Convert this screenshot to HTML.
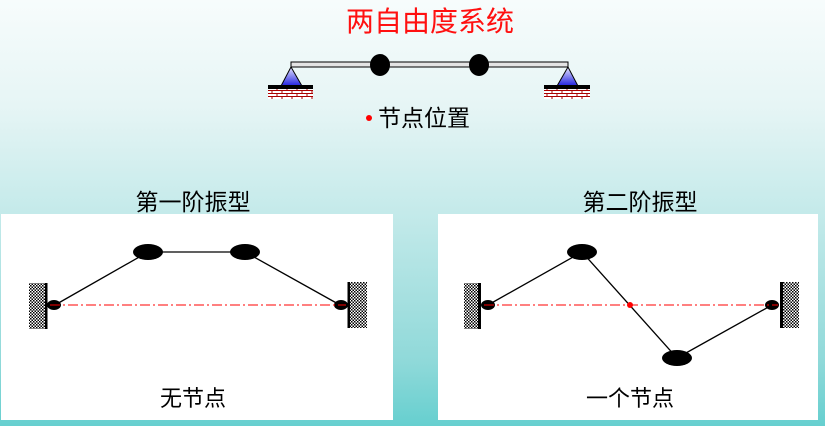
<!DOCTYPE html>
<html><head><meta charset="utf-8"><style>
html,body{margin:0;padding:0;width:825px;height:426px;overflow:hidden}
body{background:linear-gradient(to bottom,#f7fcfc 0%,#e6f5f5 25%,#c4eaea 50%,#a6e0e0 70%,#8fd9d9 85%,#66cfcf 100%);font-family:"Liberation Serif","Noto Serif CJK SC","Noto Sans CJK SC",serif}
</style></head><body>
<svg width="825" height="426" viewBox="0 0 825 426" xmlns="http://www.w3.org/2000/svg">
<defs>
<linearGradient id="tri" x1="0" y1="0" x2="0" y2="1"><stop offset="0" stop-color="#e8e8ff"/><stop offset="1" stop-color="#2020e0"/></linearGradient>
<pattern id="hatch" width="3" height="3" patternUnits="userSpaceOnUse"><rect width="3" height="3" fill="#fff"/><rect width="1.5" height="1.5" fill="#000"/><rect x="1.5" y="1.5" width="1.5" height="1.5" fill="#000"/></pattern>
<pattern id="brick" width="10" height="6" patternUnits="userSpaceOnUse"><rect width="10" height="6" fill="#fff"/><path d="M0 0.5H10M0 3.5H10M2 0.5V3.5M7 3.5V6.5" stroke="#a00" stroke-width="1"/></pattern>
</defs>
<text x="430" y="31" text-anchor="middle" font-size="28" fill="#ff1010" font-family="Liberation Sans,'Noto Sans CJK SC',sans-serif">两自由度系统</text>
<!-- beam -->
<rect x="291" y="62" width="277" height="5" fill="#e4e4e4" stroke="#000" stroke-width="1"/>
<ellipse cx="380" cy="65" rx="10" ry="11" fill="#000"/>
<ellipse cx="479" cy="65" rx="10" ry="11" fill="#000"/>
<polygon points="291,67 281,86 302,86" fill="url(#tri)" stroke="#000"/>
<polygon points="568,67 557,86 578,86" fill="url(#tri)" stroke="#000"/>
<rect x="268" y="85" width="45" height="4" fill="#000"/>
<rect x="268" y="89" width="45" height="10" fill="url(#brick)"/>
<rect x="544" y="85" width="46" height="4" fill="#000"/>
<rect x="544" y="89" width="46" height="10" fill="url(#brick)"/>
<circle cx="369" cy="118" r="3" fill="#f00"/>
<text x="378" y="126" font-size="23" fill="#000" font-family="Liberation Sans,'Noto Sans CJK SC',sans-serif">节点位置</text>
<text x="193" y="210" text-anchor="middle" font-size="23" fill="#000" font-family="Liberation Sans,'Noto Sans CJK SC',sans-serif">第一阶振型</text>
<text x="640" y="210" text-anchor="middle" font-size="23" fill="#000" font-family="Liberation Sans,'Noto Sans CJK SC',sans-serif">第二阶振型</text>
<!-- panel 1 -->
<rect x="1" y="214" width="392" height="206" fill="#fff"/>
<rect x="29" y="283" width="16" height="46" fill="url(#hatch)"/>
<rect x="45" y="283" width="2.5" height="46" fill="#000"/>
<rect x="350" y="282" width="17" height="46" fill="url(#hatch)"/>
<rect x="347.5" y="282" width="2.5" height="46" fill="#000"/>
<polyline points="55,305 148,252 245,252 340,305" fill="none" stroke="#000" stroke-width="1.3"/>
<ellipse cx="148" cy="252" rx="15" ry="8" fill="#000"/>
<ellipse cx="245" cy="252" rx="15" ry="8" fill="#000"/>
<ellipse cx="54" cy="305" rx="7" ry="5" fill="#000"/>
<ellipse cx="341" cy="305" rx="7" ry="5" fill="#000"/>
<line x1="50" y1="305" x2="346" y2="305" stroke="#f00" stroke-width="1" stroke-dasharray="10,3,2,3"/>
<text x="193" y="406" text-anchor="middle" font-size="22" fill="#000" font-family="Liberation Sans,'Noto Sans CJK SC',sans-serif">无节点</text>
<!-- panel 2 -->
<rect x="438" y="214" width="380" height="206" fill="#fff"/>
<rect x="464" y="283" width="14" height="46" fill="url(#hatch)"/>
<rect x="478" y="283" width="3" height="46" fill="#000"/>
<rect x="783" y="282" width="16" height="46" fill="url(#hatch)"/>
<rect x="780" y="282" width="3" height="46" fill="#000"/>
<polyline points="488,305 582,252 677,358 772,305" fill="none" stroke="#000" stroke-width="1.3"/>
<ellipse cx="582" cy="252" rx="15" ry="8" fill="#000"/>
<ellipse cx="677" cy="358" rx="15" ry="8" fill="#000"/>
<ellipse cx="488" cy="305" rx="7" ry="5" fill="#000"/>
<ellipse cx="772" cy="305" rx="7" ry="5" fill="#000"/>
<line x1="484" y1="305" x2="778" y2="305" stroke="#f00" stroke-width="1" stroke-dasharray="10,3,2,3"/>
<circle cx="630" cy="305" r="3" fill="#f00"/>
<text x="630" y="406" text-anchor="middle" font-size="22" fill="#000" font-family="Liberation Sans,'Noto Sans CJK SC',sans-serif">一个节点</text>
</svg>
</body></html>
